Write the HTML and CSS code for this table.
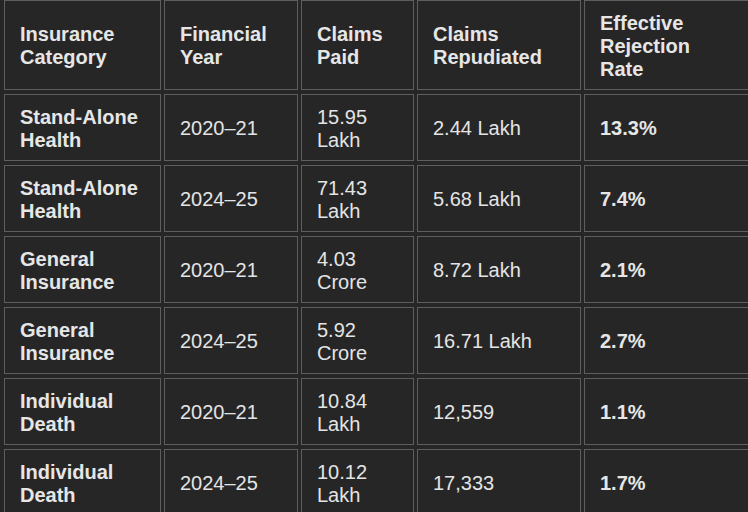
FILE: index.html
```html
<!DOCTYPE html>
<html lang="en">
<head>
<meta charset="utf-8">
<title>Claims Rejection</title>
<link rel="stylesheet" href="styles.css">
</head>
<body>
<table class="claims">
  <thead>
    <tr>
      <th class="c1">Insurance Category</th>
      <th class="c2">Financial Year</th>
      <th class="c3">Claims Paid</th>
      <th class="c4">Claims Repudiated</th>
      <th class="c5">Effective Rejection Rate</th>
    </tr>
  </thead>
  <tbody>
    <tr><td class="cat">Stand-Alone Health</td><td>2020–21</td><td>15.95 Lakh</td><td>2.44 Lakh</td><td class="rate">13.3%</td></tr>
    <tr><td class="cat">Stand-Alone Health</td><td>2024–25</td><td>71.43 Lakh</td><td>5.68 Lakh</td><td class="rate">7.4%</td></tr>
    <tr><td class="cat">General Insurance</td><td>2020–21</td><td>4.03 Crore</td><td>8.72 Lakh</td><td class="rate">2.1%</td></tr>
    <tr><td class="cat">General Insurance</td><td>2024–25</td><td>5.92 Crore</td><td>16.71 Lakh</td><td class="rate">2.7%</td></tr>
    <tr><td class="cat">Individual Death</td><td>2020–21</td><td>10.84 Lakh</td><td>12,559</td><td class="rate">1.1%</td></tr>
    <tr><td class="cat">Individual Death</td><td>2024–25</td><td>10.12 Lakh</td><td>17,333</td><td class="rate">1.7%</td></tr>
  </tbody>
</table>
</body>
</html>
```
FILE: styles.css
```css
html, body {
  margin: 0;
  padding: 0;
  background: #262626;
  overflow: hidden;
}
body {
  font-family: "Liberation Sans", Arial, sans-serif;
  font-size: 20px;
  color: #e4e4e4;
}
.claims {
  table-layout: fixed;
  border-collapse: separate;
  border-spacing: 3px 4px;
  margin: -4px 0 0 1px;
  width: 754px;
}
.claims th,
.claims td {
  border: 1px solid #5e5e5e;
  padding: 10.5px 15px 8.5px;
  text-align: left;
  vertical-align: middle;
  line-height: normal;
}
.claims th {
  font-weight: bold;
  color: #e6e6e6;
}
.c1 { width: 125px; }
.c2 { width: 102px; }
.c3 { width: 81px; }
.c4 { width: 132px; }
.c5 { width: 136px; }
.cat,
.rate {
  font-weight: bold;
  color: #e6e6e6;
}
```
